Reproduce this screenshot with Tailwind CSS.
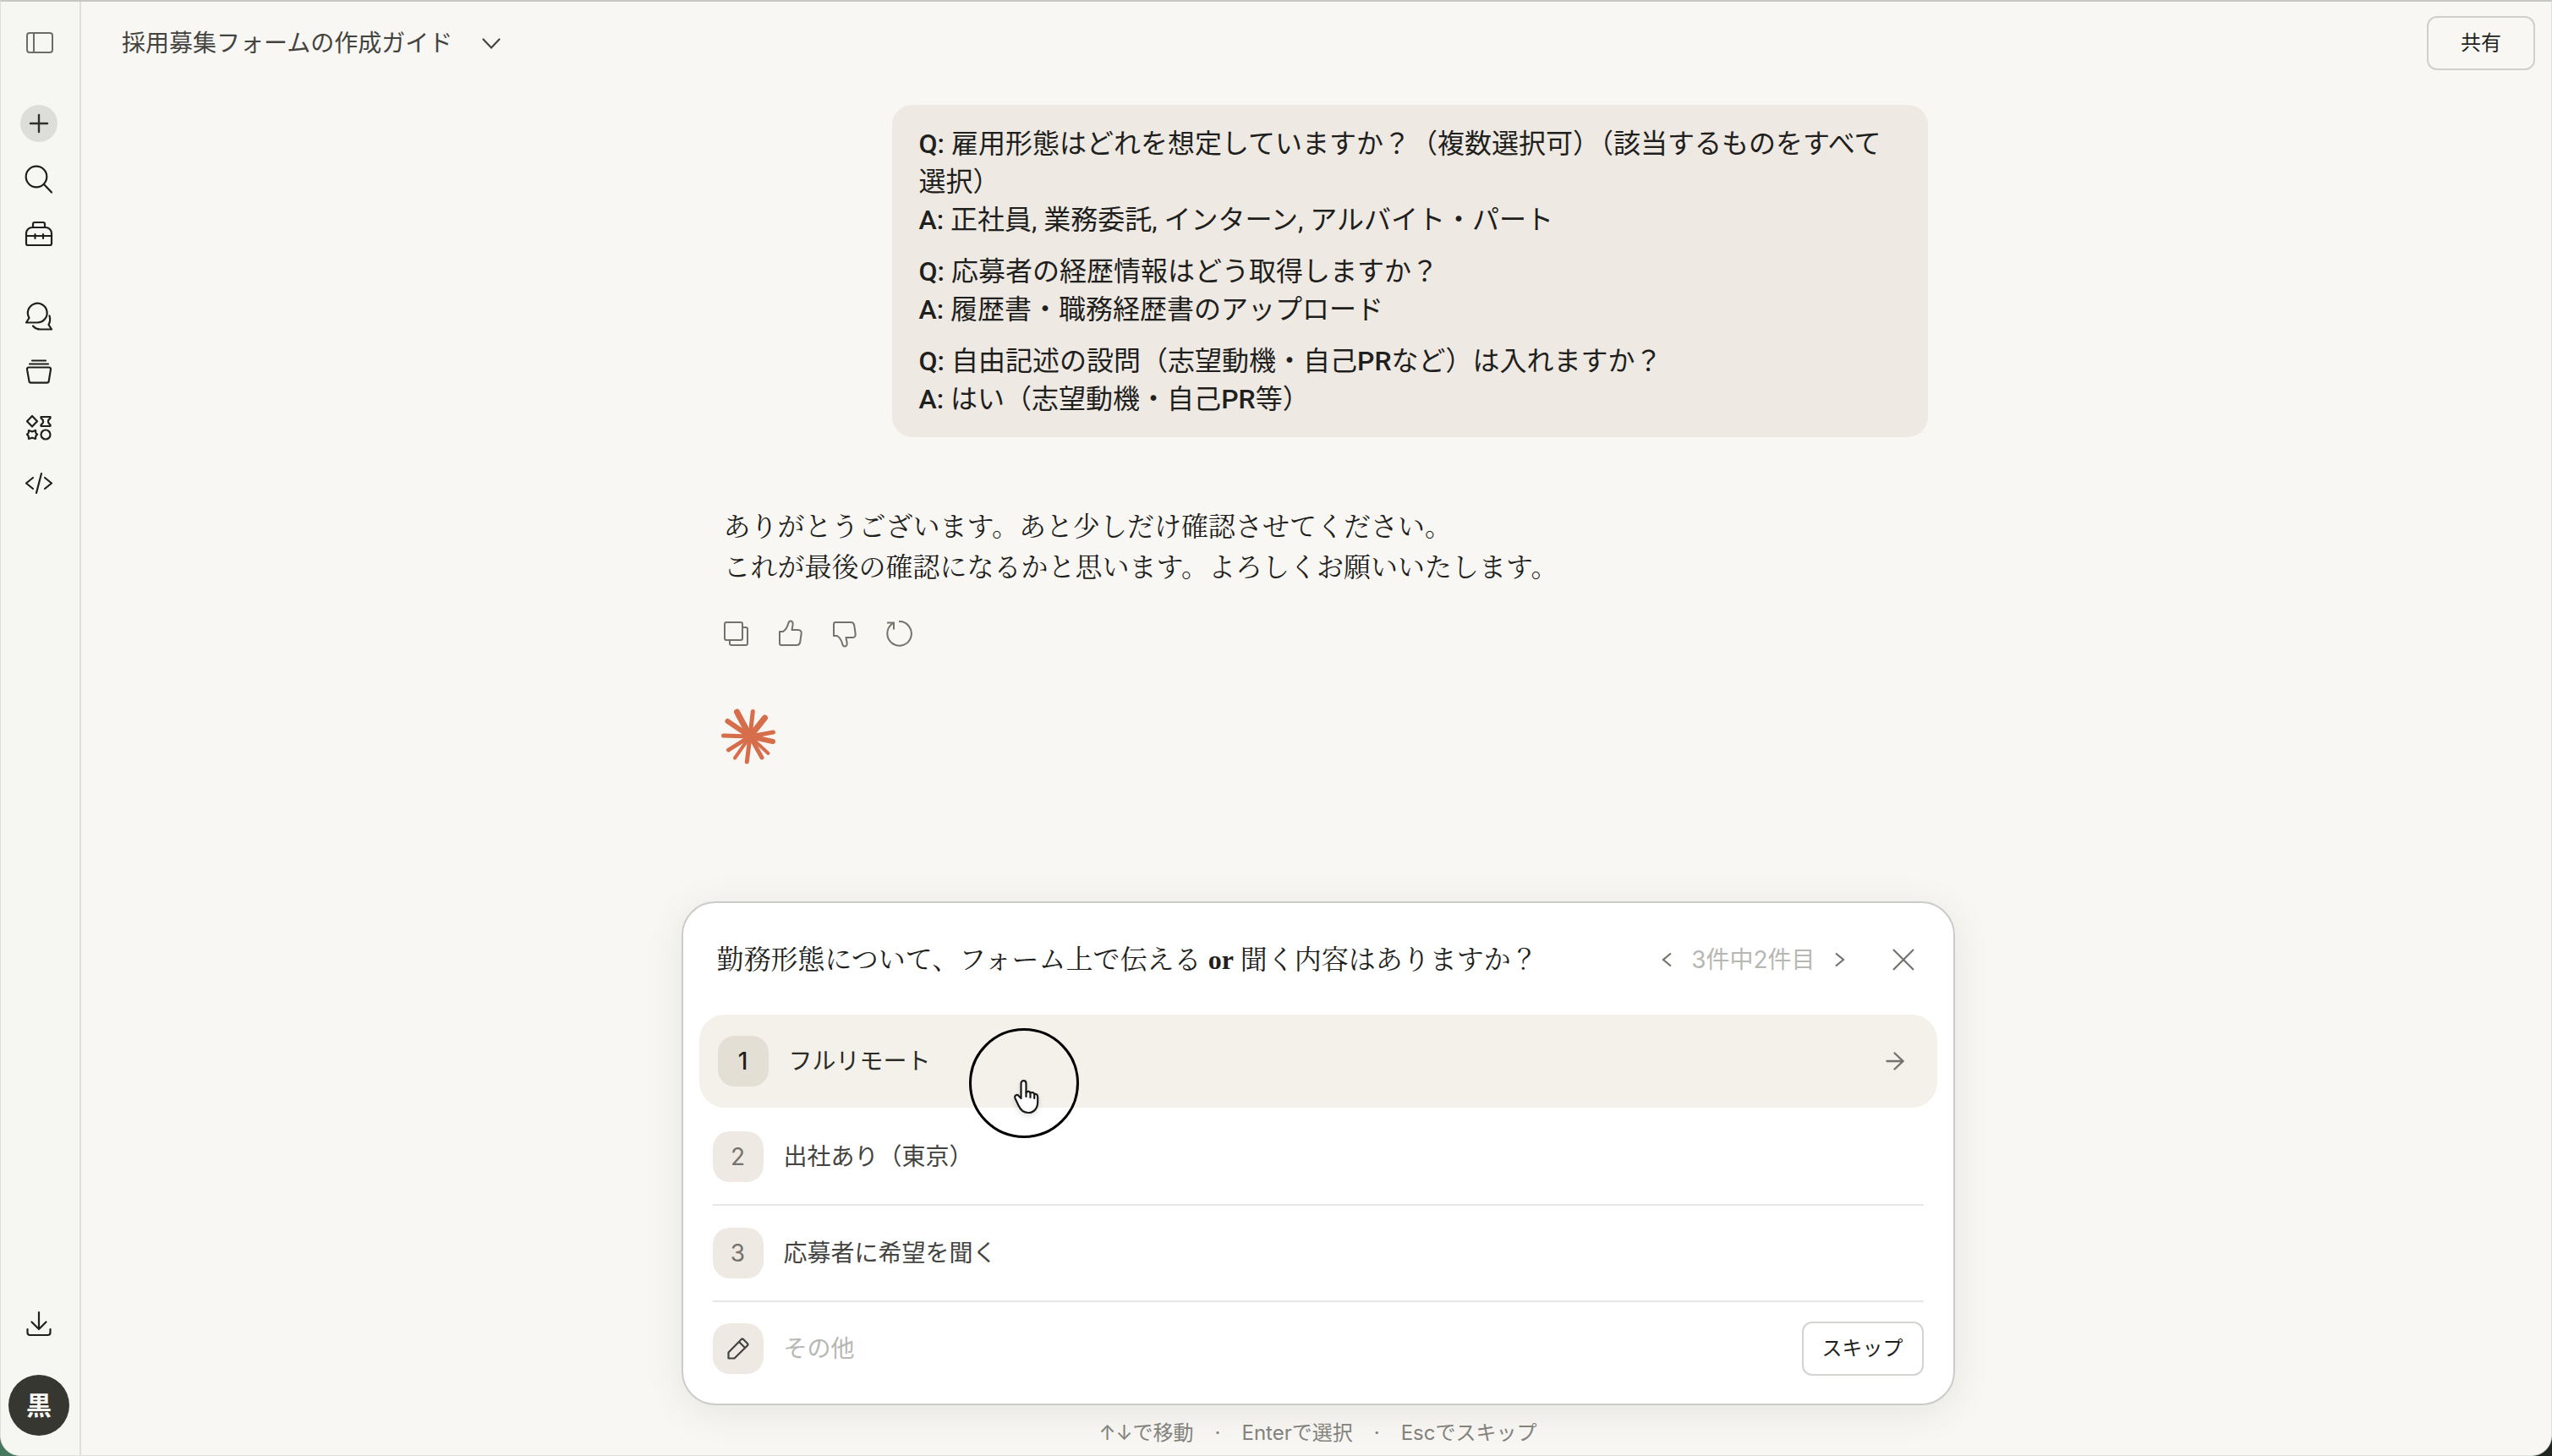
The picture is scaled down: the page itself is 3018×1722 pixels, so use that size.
<!DOCTYPE html>
<html lang="ja">
<head>
    <meta charset="UTF-8">
    <meta name="viewport" content="width=device-width, initial-scale=1.0">
    <title>採用募集フォームの作成ガイド</title>
    <script src="https://cdn.jsdelivr.net/npm/@tailwindcss/browser@4"></script>
</head>
<body class="bg-linear-to-r from-[#47785f] to-[#1f2622] font-['Inter','Noto_Sans_CJK_JP',sans-serif] text-[#1f1f1d]">
    <div class="flex h-screen overflow-hidden rounded-b-3xl border-x border-t-2 border-b border-[#dededb] border-t-[#c6c6c4] bg-[#f8f7f3]">
        <!-- Sidebar -->
        <aside class="flex w-[95px] shrink-0 flex-col items-center justify-between border-r-2 border-[#dfdfdb] bg-[#f6f6f2] pt-[26px] pr-[3px] pb-[23px]">
            <nav class="flex flex-col gap-[52px]">
                <button type="button" aria-label="サイドバーを開く" class="flex size-11 items-center justify-center text-[#6c6c69]">
                    <svg class="size-10" viewBox="0 0 40 40" fill="none" stroke="currentColor" stroke-width="2"><rect x="6" y="9" width="30" height="23" rx="3"/><path d="M14 9v23"/></svg>
                </button>
                <div class="flex flex-col gap-[22px]">
                    <button type="button" aria-label="新規チャット" class="flex size-11 items-center justify-center rounded-full bg-[#dddeda] text-[#30302d]">
                        <svg class="size-10" viewBox="0 0 40 40" fill="none" stroke="currentColor" stroke-width="2.4" stroke-linecap="round"><path d="M20 10v20M10 20h20"/></svg>
                    </button>
                    <button type="button" aria-label="検索" class="flex size-11 items-center justify-center">
                        <svg class="size-10" viewBox="0 0 40 40" fill="none" stroke="currentColor" stroke-width="2.2" stroke-linecap="round"><circle cx="17" cy="17" r="12.3"/><path d="M26 26l9 9.5"/></svg>
                    </button>
                    <button type="button" aria-label="ツール" class="flex size-11 items-center justify-center">
                        <svg class="size-10" viewBox="0 0 40 40" fill="none" stroke="currentColor" stroke-width="2.2" stroke-linecap="round"><path d="M5 30V18a7 7 0 0 1 7-7h16a7 7 0 0 1 7 7v12a2 2 0 0 1-2 2H7a2 2 0 0 1-2-2z"/><path d="M13 11V7a2 2 0 0 1 2-2h10a2 2 0 0 1 2 2v4M5 21h30M15.500 19v5M25 19v5"/></svg>
                    </button>
                </div>
                <div class="flex flex-col gap-[22px]">
                    <button type="button" aria-label="チャット" class="flex size-11 items-center justify-center">
                        <svg class="size-10" viewBox="0 0 40 40" fill="none" stroke="currentColor" stroke-width="2.2" stroke-linecap="round" stroke-linejoin="round"><path d="M18 27.500H5L8.500 22a11.400 11.400 0 1 1 9.500 5.500z"/><path d="M32.500 19.500c1.300 4 .6 7.500-1 10.500l3.500 5.500H22c-4 0-7-1.500-9-4"/></svg>
                    </button>
                    <button type="button" aria-label="プロジェクト" class="flex size-11 items-center justify-center">
                        <svg class="size-10" viewBox="0 0 40 40" fill="none" stroke="currentColor" stroke-width="2.2" stroke-linecap="round"><path d="M12 6.500h16M9 10.500h22"/><path d="M8 14.500h24a2 2 0 0 1 2 2.400l-2.300 14a2 2 0 0 1-2 1.800H10.500a2 2 0 0 1-2-1.800L6 16.900a2 2 0 0 1 2-2.400z"/></svg>
                    </button>
                    <button type="button" aria-label="アーティファクト" class="flex size-11 items-center justify-center">
                        <svg class="size-10" viewBox="0 0 40 40" fill="none" stroke="currentColor" stroke-width="2.2" stroke-linejoin="round"><path d="M12 6l6 6.300-6 6.200-6-6.200z"/><path d="M22.500 7h11v1.500c-3.500 2.500-3.500 5.500 0 8V18h-11v-1.500c3.500-2.500 3.500-5.500 0-8z"/><path d="M8 23l4 1.500L16 23l.3 3L18 27.800l-1.700 2-.3 3.200-4-1.300L8 33l-.3-3.200-1.700-2L7.700 26z"/><circle cx="28" cy="28" r="5.500"/></svg>
                    </button>
                    <button type="button" aria-label="コード" class="flex size-11 items-center justify-center">
                        <svg class="size-10" viewBox="0 0 40 40" fill="none" stroke="currentColor" stroke-width="2.2" stroke-linecap="round" stroke-linejoin="round"><path d="M13 13l-8 6.500 8 6.500M27 13l8 6.500-8 6.500M23 8l-6 23"/></svg>
                    </button>
                </div>
            </nav>
            <div class="flex flex-col items-center gap-[38px]">
                <button type="button" aria-label="ダウンロード" class="flex size-11 items-center justify-center">
                    <svg class="size-10" viewBox="0 0 40 40" fill="none" stroke="currentColor" stroke-width="2.2" stroke-linecap="round"><path d="M20 6v20M11.500 17.500l8.500 8.500 8.500-8.500M6.500 26v4a3 3 0 0 0 3 3h21a3 3 0 0 0 3-3v-4"/></svg>
                </button>
                <button type="button" aria-label="アカウント" class="flex size-[72px] items-center justify-center rounded-full bg-[#373732] text-[30px] leading-none font-bold text-[#f8f7f3]">黒</button>
            </div>
        </aside>

        <!-- Chat -->
        <main class="flex min-w-0 flex-1 flex-col">
            <header class="flex h-[98px] shrink-0 items-center justify-between pr-[19px] pl-12">
                <button type="button" class="flex items-center gap-[34px] text-[28px] leading-10 text-[#43433f]">
                    採用募集フォームの作成ガイド
                    <svg class="h-6 w-6" viewBox="0 0 24 24" fill="none" stroke="currentColor" stroke-width="2.2" stroke-linecap="round"><path d="M2.500 7.500l9.500 10 9.500-10"/></svg>
                </button>
                <button type="button" class="h-16 w-32 rounded-xl border-2 border-[#d0cfcb] text-2xl">共有</button>
            </header>

            <div class="flex min-h-0 flex-1 flex-col pl-1">
                <section class="mx-auto w-full max-w-[1506px] flex-1 overflow-hidden pt-6 pr-8 pl-[50px]">
                    <div class="ml-auto flex w-[1225px] max-w-full flex-col gap-4 rounded-3xl bg-[#eee9e3] px-8 pt-6 pb-[22px] font-['Roboto','Noto_Sans_CJK_JP',sans-serif] text-[32px] leading-[45px]">
                        <p><span class="font-medium">Q: </span>雇用形態はどれを想定していますか？（複数選択可）（該当するものをすべて選択）<br><span class="font-medium">A: </span>正社員, 業務委託, インターン, アルバイト・パート</p>
                        <p><span class="font-medium">Q: </span>応募者の経歴情報はどう取得しますか？<br><span class="font-medium">A: </span>履歴書・職務経歴書のアップロード</p>
                        <p><span class="font-medium">Q: </span>自由記述の設問（志望動機・自己<span class="font-medium">PR</span>など）は入れますか？<br><span class="font-medium">A: </span>はい（志望動機・自己<span class="font-medium">PR</span>等）</p>
                    </div>

                    <p class="mt-[82px] font-['Liberation_Serif','Noto_Serif_CJK_JP','Noto_Sans_CJK_JP',serif] text-[32px] leading-12">ありがとうございます。あと少しだけ確認させてください。<br>これが最後の確認になるかと思います。よろしくお願いいたします。</p>

                    <div class="mt-9 flex gap-7 text-[#73726d]">
                        <button type="button" aria-label="コピー"><svg class="size-9" viewBox="5 0 36 36" fill="none" stroke="currentColor" stroke-width="2"><rect x="6" y="5" width="21" height="21" rx="2"/><path d="M27 11h4a2 2 0 0 1 2 2v17a2 2 0 0 1-2 2H14a2 2 0 0 1-2-2v-4"/></svg></button>
                        <button type="button" aria-label="良い回答"><svg class="size-9" viewBox="5 0 36 36" fill="none" stroke="currentColor" stroke-width="2" stroke-linejoin="round"><path d="M7 16h4c3-2 5-5 6-9 .6-2.500 1.500-3.500 3-3.500 2.500 0 3 2.500 2.500 5L21.500 14H29c2.500 0 4 1.800 3.700 4l-1.400 10c-.3 2.500-2 4-4.300 4H9a2 2 0 0 1-2-2z"/></svg></button>
                        <button type="button" aria-label="良くない回答"><svg class="size-9" viewBox="5 0 36 36" fill="none" stroke="currentColor" stroke-width="2" stroke-linejoin="round"><path d="M7 21h4c3 2 5 5 6 9 .6 2.500 1.500 3.500 3 3.500 2.500 0 3-2.500 2.500-5L21.500 23H29c2.500 0 4-1.800 3.700-4L31.300 9c-.3-2.500-2-4-4.300-4H9a2 2 0 0 0-2 2z"/></svg></button>
                        <button type="button" aria-label="再試行"><svg class="size-9" viewBox="5 0 36 36" fill="none" stroke="currentColor" stroke-width="2"><path d="M20 4a14.300 14.300 0 1 1-7.500 2.500M6 5.500h8v8"/></svg></button>
                    </div>

                    <svg class="mt-[72px] h-16 w-[62px] overflow-visible" viewBox="-31 -32 62 64" stroke="#d66d4b" stroke-linecap="round">
                        <path stroke-width="7" d="M0 0L-15.500-29M0 0L17.500-22"/>
                        <path stroke-width="6" d="M0 0L-26.500-18M0 0L27 6"/>
                        <path stroke-width="5" d="M0 0L3.300-29.500M0 0L27.500-5M0 0L14 25M0 0L-3.700 30M0 0L-25.500 16M0 0L-31.500-1"/>
                        <path stroke-width="4" d="M0 0L21.500 20M0 0L-18 25.500"/>
                        <circle r="5" fill="#d66d4b"/>
                    </svg>
                </section>

                <!-- Question card -->
                <section class="mx-auto w-full max-w-[1506px] shrink-0 pb-2">
                    <form class="rounded-[40px] border-2 border-[#cbcbc8] bg-white px-[19px] pb-[10px] shadow-[0_8px_48px_rgba(0,0,0,0.08)]">
                        <div class="flex h-[132px] items-center justify-between pt-[2px] pr-[26px] pl-[21px]">
                            <h2 class="font-['Liberation_Serif','Noto_Serif_CJK_JP','Noto_Sans_CJK_JP',serif] text-[32px] leading-12">勤務形態について、フォーム上で伝える <span class="font-semibold">or</span> 聞く内容はありますか？</h2>
                            <div class="flex items-center text-[#73726d]">
                                <button type="button" aria-label="前の質問"><svg class="size-6" viewBox="0 0 24 24" fill="none" stroke="currentColor" stroke-width="2.200"><path d="M16 4.500L7 12l9 7.500"/></svg></button>
                                <span class="mx-4 text-[28px] leading-10 text-[#b7b7b3]">3件中2件目</span>
                                <button type="button" aria-label="次の質問"><svg class="size-6" viewBox="0 0 24 24" fill="none" stroke="currentColor" stroke-width="2.200"><path d="M8 4.500l9 7.500-9 7.500"/></svg></button>
                                <button type="button" aria-label="閉じる" class="ml-[50px]"><svg class="size-7" viewBox="0 0 28 28" fill="none" stroke="currentColor" stroke-width="2.200"><path d="M2 2l24 24M26 2L2 26"/></svg></button>
                            </div>
                        </div>

                        <div class="relative mb-[2px]">
                            <button type="button" class="flex h-[110px] w-full items-center gap-6 rounded-[30px] bg-[#f3f1ea] pr-[38px] pl-[22px] text-left text-[28px] text-[#2b2b28]">
                                <span class="flex size-15 items-center justify-center rounded-[20px] bg-[#e3dfd5] text-[28px] font-medium text-[#1f1f1d]">1</span>
                                <span class="flex-1">フルリモート</span>
                                <svg class="size-6 text-[#73726d]" viewBox="0 0 24 24" fill="none" stroke="currentColor" stroke-width="2.400" stroke-linecap="round"><path d="M2.500 12h19M11.500 2.500L21.500 12l-10 9.500"/></svg>
                            </button>
                            <!-- Pointer with click ring -->
                            <div class="pointer-events-none absolute top-4 left-[319px] z-10 flex size-[130px] items-center justify-center rounded-full border-3 border-black">
                                <svg class="mt-8 h-11 w-9 drop-shadow-md" viewBox="0 0 36 44" fill="#fff" stroke="#1a1a1a" stroke-width="2.200" stroke-linejoin="round" stroke-linecap="round"><path d="M14.500 24V6.500c0-4.500 6-4.500 6 0V17c1.500-1.800 4.500-1.500 5 .8 1.800-1.500 4.300-.8 4.700 1.400 2-.8 4 .5 4 3V28c0 8-4.500 13-11.200 13-5.500 0-9-3-11.500-8.500L7.500 24c-1.300-3.500 2.500-5.500 4.500-2.500z"/><path d="M20.500 17v5M25.500 18v5M30.200 19.500v4.500" fill="none"/></svg>
                            </div>
                        </div>
                        <div class="px-4">
                            <button type="button" class="flex h-[114px] w-full items-center gap-6 border-b-2 border-[#e6e6e4] text-left text-[28px] text-[#43433f]">
                                <span class="flex size-15 items-center justify-center rounded-[20px] bg-[#eee9e3] text-[28px] text-[#73726d]">2</span>
                                <span>出社あり（東京）</span>
                            </button>
                            <button type="button" class="flex h-[114px] w-full items-center gap-6 border-b-2 border-[#e6e6e4] text-left text-[28px] text-[#43433f]">
                                <span class="flex size-15 items-center justify-center rounded-[20px] bg-[#eee9e3] text-[28px] text-[#73726d]">3</span>
                                <span>応募者に希望を聞く</span>
                            </button>
                            <div class="flex h-[110px] items-center gap-6">
                                <label for="other" aria-label="その他" class="flex size-15 items-center justify-center rounded-[20px] bg-[#eee9e3] text-[#43433f]">
                                    <svg class="size-7" viewBox="0 0 28 28" fill="none" stroke="currentColor" stroke-width="2.200" stroke-linejoin="round"><path d="M2.500 25.500v-7L17.500 3.200a2 2 0 0 1 2.800 0l4.500 4.500a2 2 0 0 1 0 2.800L9.500 25.500zM15 6l7 7"/></svg>
                                </label>
                                <input id="other" type="text" placeholder="その他" class="min-w-0 flex-1 bg-transparent text-[28px] outline-none placeholder:text-[#b7b7b3]">
                                <button type="button" class="h-16 w-36 rounded-xl border-2 border-[#d3d3d0] text-2xl">スキップ</button>
                            </div>
                        </div>
                    </form>
                    <p class="mt-[15px] flex justify-center gap-[25px] text-2xl leading-9 text-[#83827d]"><span>↑↓で移動</span><span>·</span><span>Enterで選択</span><span>·</span><span>Escでスキップ</span></p>
                </section>
            </div>
        </main>
    </div>
</body>
</html>
